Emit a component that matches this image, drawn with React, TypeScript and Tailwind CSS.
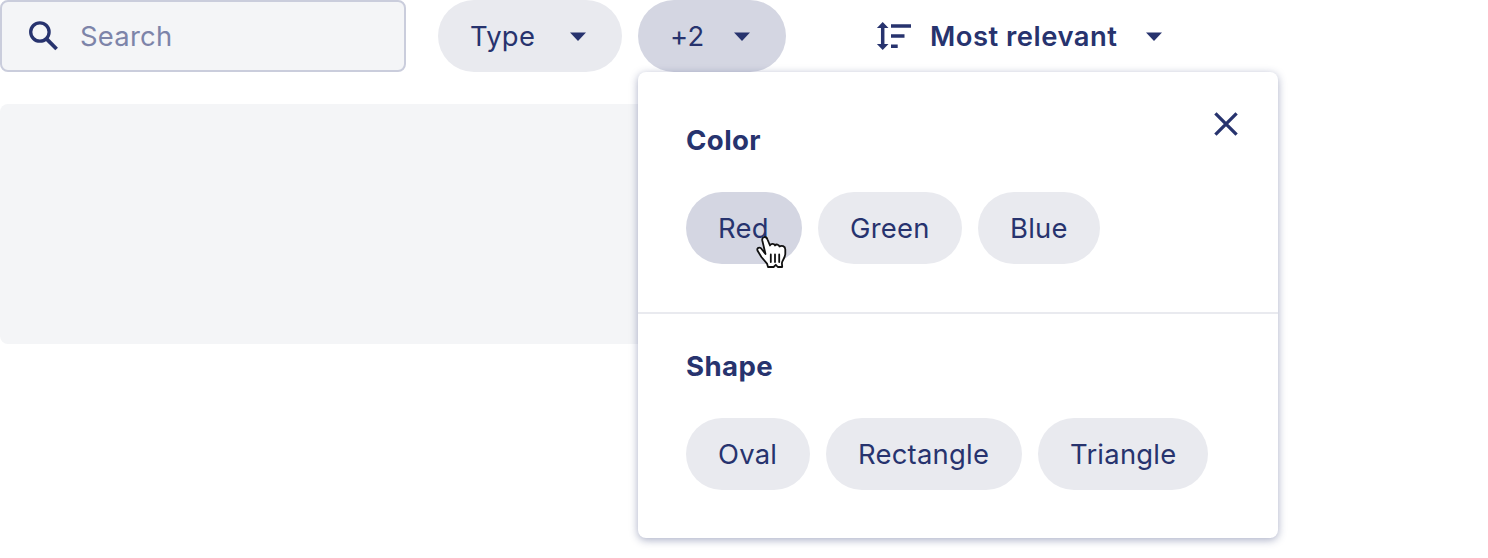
import React from "react";

const Caret = () => (
  <svg width="16" height="9" viewBox="0 0 16 9" className="relative shrink-0" fill="currentColor"><path d="M0 .6h16L8 9z" /></svg>
);

function Chip({ label, className }: { label: string; className: string }) {
  return <button className={`flex h-[72px] items-center rounded-full pl-8 ${className}`}>{label}</button>;
}

export default function App() {
  return (
    <div className="relative h-[558px] w-[1488px] overflow-hidden bg-white font-['Inter',sans-serif] text-[27.4px] leading-9 tracking-[0.25px] text-[#27336e]">
      <header className="flex h-[72px]">
        <div className="flex w-[406px] items-center rounded-lg border-2 border-[#cacddc] bg-[#f4f5f7] pl-[26px]">
          <svg width="32" height="32" viewBox="0 0 32 32" fill="none" stroke="currentColor" strokeWidth="3.3"><circle cx="11.9" cy="12" r="9.2" /><path d="M18.3 18.6L28.6 29" strokeWidth="3.8" /></svg>
          <span className="ml-5 text-[#7d84a9]">Search</span>
        </div>
        <button className="ml-8 flex w-[184px] items-center rounded-full bg-[#e9eaef] pl-8"><span className="w-[100px] text-left">Type</span><Caret /></button>
        <button className="ml-4 flex w-[148px] items-center rounded-full bg-[#d4d6e2] pl-8"><span className="w-16 text-left">+2</span><Caret /></button>
        <button className="ml-[90px] flex items-center font-semibold tracking-[0.5px]">
          <svg width="36" height="30" viewBox="0 0 36 30" fill="none" stroke="currentColor" strokeWidth="3.5"><path d="M6.7 5v20M15 5h20M15 15h13.5M15 25.2h6.7" /><path fill="currentColor" stroke="none" d="M6.7 1l5.8 6H.9zM6.7 29l5.8-6H.9z" /></svg>
          <span className="ml-[18px] w-[216px] text-left">Most relevant</span><Caret />
        </button>
      </header>
      <main className="mt-8 h-[240px] w-[700px] rounded-lg bg-[#f4f5f7]" />
      <section className="absolute left-[638px] top-[72px] h-[466px] w-[640px] rounded-lg bg-white shadow-[0_2px_8px_rgba(39,52,111,0.4)]">
        <div className="h-[242px] border-b-2 border-[#e9eaef] px-12 pt-[50px]">
          <h2 className="text-[27.6px] font-bold tracking-[0.4px]">Color</h2>
          <div className="mt-[34px] flex gap-4">
            <Chip label="Red" className="w-[116px] bg-[#d4d6e2]" />
            <Chip label="Green" className="w-[144px] bg-[#e9eaef]" />
            <Chip label="Blue" className="w-[122px] bg-[#e9eaef]" />
          </div>
        </div>
        <div className="px-12 pt-[34px]">
          <h2 className="text-[27.6px] font-bold tracking-[0.4px]">Shape</h2>
          <div className="mt-[34px] flex gap-4">
            <Chip label="Oval" className="w-[124px] bg-[#e9eaef]" />
            <Chip label="Rectangle" className="w-[196px] bg-[#e9eaef]" />
            <Chip label="Triangle" className="w-[170px] bg-[#e9eaef]" />
          </div>
        </div>
        <button aria-label="Close" className="absolute right-10 top-10"><svg width="24" height="24" viewBox="0 0 24 24" stroke="currentColor" strokeWidth="3.3"><path d="M1.4 1.4l21.2 21.2M22.6 1.4L1.4 22.6" /></svg></button>
      </section>
      <svg className="absolute left-[756px] top-[235px]" width="32" height="34" viewBox="0 0 32 34" fill="white" stroke="#111" strokeWidth="1.8" strokeLinejoin="round" strokeLinecap="round">
        <path d="M9.5 19L6.3 5.5C5.5 1.5 10.2 0.6 11.5 4.5l2.5 6c1-2.2 4.2-2 5 0 1-1.8 4-1 4.5 1 2-1.5 5.8-.4 5.8 3v4c0 4.5-3 6.5-3.4 9.5l.3 4h-4.4l-2-2.2-2.2 2.2H12l-1-3.4L5.4 22 1.6 15.8c-1.4-3 2.2-4.5 4.4-1.3z" /><path d="M14.8 19.5V27M19 19.5V27M23.2 19.5V27" />
      </svg>
    </div>
  );
}
